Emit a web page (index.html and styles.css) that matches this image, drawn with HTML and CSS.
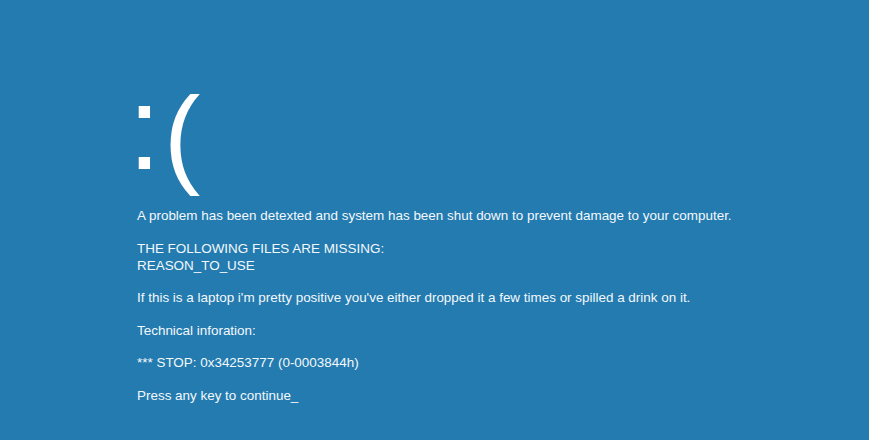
FILE: index.html
```html
<!DOCTYPE html>
<html lang="en">
<head>
    <meta charset="UTF-8">
    <meta name="viewport" content="width=device-width, initial-scale=1.0">
    <title>Blue Screen</title>
    <link rel="stylesheet" href="styles.css">
</head>
<body>
    <div class="screen">
        <div class="face"><span class="eyes">:</span><span class="mouth">(</span></div>

        <p class="line">A problem has been detexted and system has been shut down to prevent damage to your computer.</p>

        <p class="line">THE FOLLOWING FILES ARE MISSING:<br>REASON_TO_USE</p>

        <p class="line">If this is a laptop i'm pretty positive you've either dropped it a few times or spilled a drink on it.</p>

        <p class="line">Technical inforation:</p>

        <p class="line">*** STOP: 0x34253777 (0-0003844h)</p>

        <p class="line">Press any key to continue_</p>
    </div>
</body>
</html>
```

FILE: styles.css
```css
body {
    margin: 0;
    padding: 0;
    background-color: #237bb0;
    color: #f4f8fb;
    font-family: "Liberation Sans", Arial, sans-serif;
}

.screen {
    width: 869px;
    height: 440px;
    padding: 58px 0 0 137px;
    box-sizing: border-box;
    overflow: hidden;
}

.face {
    font-size: 118px;
    line-height: 140px;
    height: 140px;
    margin: 0 0 9px -9px;
    color: #ffffff;
    white-space: nowrap;
}

.mouth {
    font-size: 110px;
    line-height: 1;
    margin-left: 3px;
    vertical-align: -4px;
}

.line {
    font-size: 13.45px;
    line-height: 17px;
    margin: 0 0 15.5px 0;
}
```
